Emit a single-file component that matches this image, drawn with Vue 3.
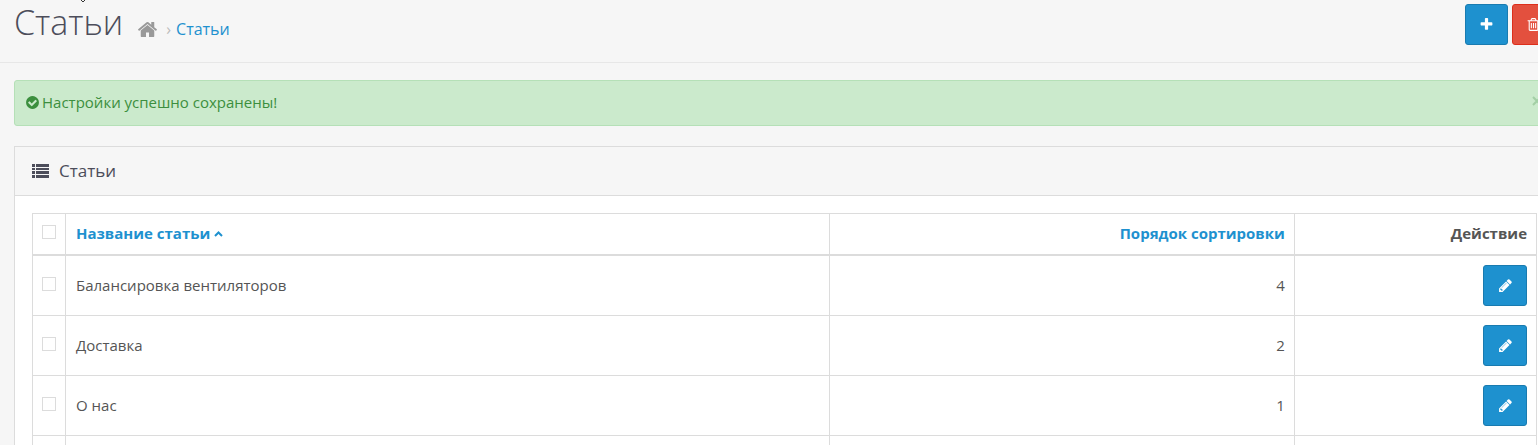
<script setup>
import { ref, computed } from 'vue'

const articles = ref([
  { id: 1, title: 'Балансировка вентиляторов', order: 4, selected: false },
  { id: 2, title: 'Доставка', order: 2, selected: false },
  { id: 3, title: 'О нас', order: 1, selected: false },
  { id: 4, title: '', order: null, selected: false },
])

const allSelected = computed({
  get: () => articles.value.every((a) => a.selected),
  set: (value) => articles.value.forEach((a) => (a.selected = value)),
})

const showAlert = ref(true)
</script>

<template>
  <div class="page">
    <header class="page-header">
      <svg class="menu-tail" viewBox="0 0 5 2" aria-hidden="true">
        <path d="M0 0h1v1h-1zM1 1h2v1h-2zM3 0h1v1h-1z" fill="#333" />
      </svg>
      <h1>Статьи</h1>
      <nav class="breadcrumb" aria-label="Навигация">
        <a href="#" aria-label="Главная" class="home">
          <svg viewBox="0 0 1792 1792"><path d="M1472 992v480q0 26-19 45t-45 19h-384v-384h-256v384h-384q-26 0-45-19t-19-45v-480q0-1 .5-3t.5-3l575-474 575 474q1 2 1 6zm223-69l-62 74q-8 9-21 11h-3q-13 0-21-7l-692-577-692 577q-12 8-24 7-13-2-21-11l-62-74q-8-10-7-23.5t11-21.5l719-599q32-26 76-26t76 26l244 204v-195q0-14 9-23t23-9h192q14 0 23 9t9 23v408l219 182q10 8 11 21.5t-7 23.5z" /></svg>
        </a>
        <span class="separator">›</span>
        <a href="#">Статьи</a>
      </nav>
      <div class="actions">
        <button type="button" class="btn primary" aria-label="Добавить">
          <svg viewBox="0 0 1792 1792"><path d="M1600 736v192q0 40-28 68t-68 28h-416v416q0 40-28 68t-68 28h-192q-40 0-68-28t-28-68v-416h-416q-40 0-68-28t-28-68v-192q0-40 28-68t68-28h416v-416q0-40 28-68t68-28h192q40 0 68 28t28 68v416h416q40 0 68 28t28 68z" /></svg>
        </button>
        <button type="button" class="btn danger" aria-label="Удалить">
          <svg viewBox="0 0 1792 1792"><path d="M704 736v576q0 14-9 23t-23 9h-64q-14 0-23-9t-9-23v-576q0-14 9-23t23-9h64q14 0 23 9t9 23zm256 0v576q0 14-9 23t-23 9h-64q-14 0-23-9t-9-23v-576q0-14 9-23t23-9h64q14 0 23 9t9 23zm256 0v576q0 14-9 23t-23 9h-64q-14 0-23-9t-9-23v-576q0-14 9-23t23-9h64q14 0 23 9t9 23zm128 724v-948h-896v948q0 22 7 40.5t14.5 27 10.5 8.5h832q3 0 10.5-8.5t14.5-27 7-40.5zm-672-1076h448l-48-117q-7-9-17-11h-317q-10 2-17 11zm928 32v64q0 14-9 23t-23 9h-96v948q0 83-47 143.5t-113 60.5h-832q-66 0-113-58.5t-47-141.5v-952h-96q-14 0-23-9t-9-23v-64q0-14 9-23t23-9h309l70-167q15-37 54-63t79-26h320q40 0 79 26t54 63l70 167h309q14 0 23 9t9 23z" /></svg>
        </button>
      </div>
    </header>

    <main class="content">
      <div v-if="showAlert" class="alert" role="status">
        <svg viewBox="0 0 1792 1792" aria-hidden="true"><path d="M1412 734q0-28-18-46l-91-90q-19-19-45-19t-45 19l-408 407-226-226q-19-19-45-19t-45 19l-91 90q-18 18-18 46 0 27 18 45l362 362q19 19 45 19 27 0 46-19l543-543q18-18 18-45zm252 162q0 209-103 385.5t-279.5 279.5-385.5 103-385.5-103-279.5-279.5-103-385.5 103-385.5 279.5-279.5 385.5-103 385.5 103 279.5 279.5 103 385.5z" /></svg>
        <span>Настройки успешно сохранены!</span>
        <button type="button" class="close" aria-label="Закрыть" @click="showAlert = false">
          <svg viewBox="0 0 10 10"><path d="M1 1l8 8M9 1l-8 8" /></svg>
        </button>
      </div>

      <section class="panel">
        <div class="panel-heading">
          <svg viewBox="0 0 17 14" aria-hidden="true">
            <path d="M0 0h3v3H0zM4 0h13v3H4zM0 4h3v2H0zM4 4h13v2H4zM0 7h3v3H0zM4 7h13v3H4zM0 11h3v3H0zM4 11h13v3H4z" />
          </svg>
          <h2>Статьи</h2>
        </div>
        <div class="panel-body">
          <table>
            <colgroup>
              <col class="col-check" />
              <col />
              <col class="col-order" />
              <col class="col-action" />
            </colgroup>
            <thead>
              <tr>
                <th class="check"><input v-model="allSelected" type="checkbox" aria-label="Выбрать все" /></th>
                <th>
                  <a href="#">Название статьи<svg class="caret" viewBox="0 0 9 6" aria-hidden="true"><path d="M1 5l3.500-3.500L8 5" /></svg></a>
                </th>
                <th class="right"><a href="#">Порядок сортировки</a></th>
                <th class="right">Действие</th>
              </tr>
            </thead>
            <tbody>
              <tr v-for="article in articles" :key="article.id">
                <td class="check"><input v-model="article.selected" type="checkbox" :aria-label="article.title" /></td>
                <td>{{ article.title }}</td>
                <td class="right">{{ article.order }}</td>
                <td class="right">
                  <a href="#" class="btn primary edit" aria-label="Редактировать">
                    <svg viewBox="0 0 1792 1792"><path d="M491 1536l91-91-235-235-91 91v107h128v128h107zm523-928q0-22-22-22-10 0-17 7l-542 542q-7 7-7 17 0 22 22 22 10 0 17-7l542-542q7-7 7-17zm-54-192l416 416-832 832h-416v-416zm683 96q0 53-37 90l-166 166-416-416 166-165q36-38 90-38 53 0 91 38l235 234q37 39 37 91z" /></svg>
                  </a>
                </td>
              </tr>
            </tbody>
          </table>
        </div>
      </section>
    </main>
  </div>
</template>

<style>
body {
  margin: 0;
  background: #f6f6f6;
}
</style>

<style scoped>
* {
  box-sizing: border-box;
}
.page {
  height: 100vh;
  overflow: hidden;
  background: #f6f6f6;
  color: #555;
  font: 15px/21px "Open Sans", "Noto Sans", sans-serif;
}
svg {
  display: block;
  fill: currentColor;
  flex: none;
}
a {
  color: #1e91cf;
  text-decoration: none;
}
.page-header {
  position: relative;
  display: flex;
  align-items: flex-start;
  margin-right: -17px;
  padding: 0 0 17px 14px;
  border-bottom: 1px solid #e7e7e7;
}
.menu-tail {
  position: absolute;
  top: 0;
  left: 81px;
  width: 5px;
  height: 2px;
}
h1 {
  margin: 0;
  color: #4c4d5a;
  font-size: 34px;
  line-height: 45px;
  font-weight: 300;
}
.breadcrumb {
  display: flex;
  align-items: center;
  margin: 18px 0 0 14px;
  font-size: 16px;
  line-height: 22px;
}
.home {
  color: #999;
}
.home svg {
  width: 21px;
  height: 21px;
}
.separator {
  padding: 0 5px 0 8px;
  color: #bbb;
}
.actions {
  display: flex;
  gap: 4px;
  margin: 4px 0 0 auto;
}
.btn {
  display: inline-flex;
  align-items: center;
  justify-content: center;
  width: 43px;
  height: 41px;
  padding: 0;
  border: 1px solid;
  border-radius: 3px;
  color: #fff;
}
.btn svg {
  width: 15px;
  height: 15px;
}
.primary {
  background: #1e91cf;
  border-color: #197bb0;
}
.danger {
  background: #e3503e;
  border-color: #dd2f1b;
}
.edit {
  width: 44px;
  vertical-align: top;
}
.content {
  margin-right: -17px;
  padding: 17px 0 0 14px;
}
.alert {
  display: flex;
  align-items: center;
  gap: 2px;
  height: 46px;
  margin-bottom: 20px;
  padding: 0 10px 2px;
  border: 1px solid #b5e0b7;
  border-radius: 3px;
  background: #cbeacc;
  color: #3c8f3e;
}
.alert > svg {
  width: 15px;
  height: 15px;
}
.close {
  margin: 0 2px 2px auto;
  padding: 0;
  border: 0;
  background: none;
  color: #a3cfa5;
}
.close svg {
  width: 10px;
  height: 10px;
  stroke: currentColor;
  stroke-width: 2;
}
.panel {
  border: 1px solid #dcdcdc;
  background: #fff;
}
.panel-heading {
  display: flex;
  align-items: center;
  gap: 10px;
  height: 49px;
  padding: 0 17px;
  border-bottom: 1px solid #dcdcdc;
  background: #f6f6f6;
  color: #4c4d5a;
}
.panel-heading svg {
  width: 17px;
  height: 14px;
}
h2 {
  margin: 0;
  font-size: 17px;
  line-height: 24px;
  font-weight: 400;
}
.panel-body {
  padding: 17px;
}
table {
  width: 100%;
  table-layout: fixed;
  border-collapse: collapse;
}
.col-check {
  width: 33px;
}
.col-order {
  width: 465px;
}
.col-action {
  width: 16.1%;
}
th,
td {
  padding: 9px 9px 9px 10px;
  border: 1px solid #dcdcdc;
  text-align: left;
  vertical-align: middle;
}
th {
  height: 41px;
  border-bottom-width: 2px;
  font-weight: 700;
}
td {
  height: 60px;
}
.right {
  text-align: right;
}
th,
th.right {
  padding-top: 8px;
}
.check,
th.check {
  padding: 0 0 3px;
  text-align: center;
}
input {
  appearance: none;
  display: block;
  width: 14px;
  height: 14px;
  margin: 0 auto;
  border: 1px solid #dcdcdc;
  background: #fff;
}
input:checked {
  background: #1e91cf;
}
.caret {
  display: inline-block;
  width: 9px;
  height: 6px;
  margin-left: 4px;
  vertical-align: 2px;
  fill: none;
  stroke: currentColor;
  stroke-width: 2;
}
</style>
